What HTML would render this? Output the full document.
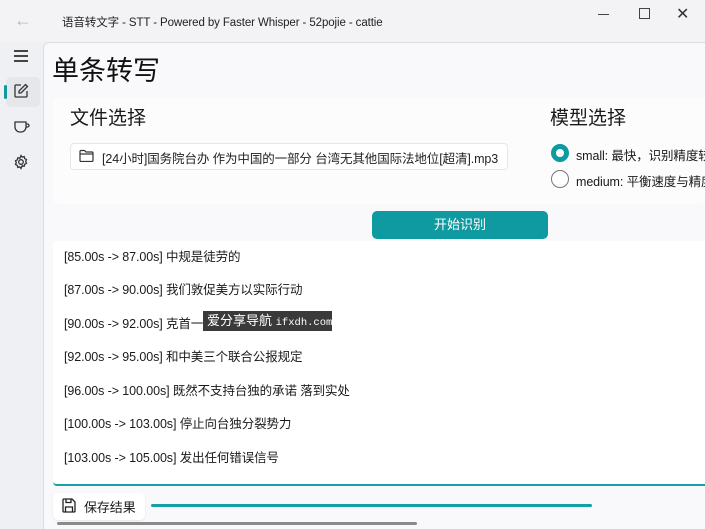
<!DOCTYPE html>
<html><head><meta charset="utf-8"><style>
*{margin:0;padding:0;box-sizing:border-box}
html,body{width:705px;height:529px;overflow:hidden}
body{background:#eef0f3;font-family:"Liberation Sans","Noto Sans CJK SC",sans-serif;color:#1a1a1a;position:relative}
.abs{position:absolute}
.t{font-size:12.5px;white-space:nowrap;letter-spacing:-0.1px}
</style></head><body>
<div class="abs" style="left:0;top:0;width:705px;height:42px;background:#f3f3f5"></div>
<div class="abs t" style="left:14px;top:10px;font-size:18px;color:#b8b8b8">←</div>
<div class="abs t" style="left:62px;top:14px;font-size:11.5px;color:#222">语音转文字 - STT - Powered by Faster Whisper - 52pojie - cattie</div>
<div class="abs" style="left:598px;top:14px;width:11px;height:1px;background:#444"></div>
<div class="abs" style="left:639px;top:8px;width:11px;height:11px;border:1px solid #444"></div>
<div class="abs t" style="left:676px;top:4px;font-size:16px;color:#333">✕</div>
<div class="abs" style="left:14px;top:50px;width:14px;height:2px;background:#444;box-shadow:0 5px 0 #444,0 10px 0 #444"></div>
<div class="abs" style="left:6px;top:77px;width:34px;height:30px;background:#e6e7ea;border-radius:5px"></div>
<div class="abs" style="left:4px;top:85px;width:3px;height:14px;background:#0e9aa0;border-radius:2px"></div>
<svg class="abs" style="left:13px;top:83px" width="16" height="16" viewBox="0 0 16 16" fill="none" stroke="#333" stroke-width="1.3"><path d="M8 2H3a1 1 0 0 0-1 1v10a1 1 0 0 0 1 1h10a1 1 0 0 0 1-1V8"/><path d="M12.5 1.5l2 2L8 10H6V8z"/></svg>
<svg class="abs" style="left:14px;top:120px" width="16" height="14" viewBox="0 0 16 14" fill="none" stroke="#333" stroke-width="1.3"><path d="M1 2h11v5a5 5 0 0 1-5 5h-1a5 5 0 0 1-5-5z"/><path d="M12 4h1.5a1.5 1.5 0 0 1 0 3H12"/></svg>
<svg class="abs" style="left:13px;top:154px" width="16" height="16" viewBox="0 0 16 16" fill="none" stroke="#333" stroke-width="1.3"><circle cx="8" cy="8" r="2.3"/><path d="M8 1.5l1.2 1.6 2-.5.5 2 1.8.9-.8 1.9.8 1.9-1.8.9-.5 2-2-.5L8 14.5l-1.2-1.6-2 .5-.5-2-1.8-.9.8-1.9-.8-1.9 1.8-.9.5-2 2 .5z"/></svg>
<div class="abs" style="left:43px;top:42px;width:670px;height:495px;background:#f9f9fb;border:1px solid #dcdde0;border-radius:6px 0 0 0"></div>
<div class="abs t" style="left:52px;top:49px;font-size:27px;color:#111;letter-spacing:0">单条转写</div>
<div class="abs" style="left:53px;top:98px;width:652px;height:106px;background:#fcfcfd;border-radius:5px"></div>
<div class="abs t" style="left:70px;top:103px;font-size:19px;letter-spacing:0">文件选择</div>
<div class="abs" style="left:70px;top:143px;width:438px;height:27px;background:#fff;border:1px solid #e6e6e8;border-radius:4px"></div>
<svg class="abs" style="left:79px;top:149px" width="15" height="13" viewBox="0 0 15 13" fill="none" stroke="#333" stroke-width="1.2"><path d="M1 2.5a1 1 0 0 1 1-1h3.5l1.5 1.5h6a1 1 0 0 1 1 1v7.5a1 1 0 0 1-1 1H2a1 1 0 0 1-1-1z"/><path d="M1 5h13"/></svg>
<div class="abs t" style="left:102px;top:148px;color:#222;letter-spacing:-0.1px">[24小时]国务院台办 作为中国的一部分 台湾无其他国际法地位[超清].mp3</div>
<div class="abs t" style="left:550px;top:103px;font-size:19px;letter-spacing:0">模型选择</div>
<div class="abs" style="left:551px;top:144px;width:18px;height:18px;border-radius:50%;border:5px solid #0e9aa0;background:#fff"></div>
<div class="abs t" style="left:576px;top:145px">small: 最快，识别精度较低</div>
<div class="abs" style="left:551px;top:170px;width:18px;height:18px;border-radius:50%;border:1px solid #777;background:#fff"></div>
<div class="abs t" style="left:576px;top:171px">medium: 平衡速度与精度</div>
<div class="abs" style="left:372px;top:211px;width:176px;height:28px;background:#0e9aa0;border-radius:5px;color:#fff;font-size:13px;text-align:center;line-height:27px">开始识别</div>
<div class="abs" style="left:53px;top:241px;width:652px;height:245px;background:#fff;border-bottom:2px solid #13a0a6;border-radius:4px 0 0 4px"></div>
<div class="abs t" style="left:64px;top:246px">[85.00s -&gt; 87.00s] 中规是徒劳的</div>
<div class="abs t" style="left:64px;top:279px">[87.00s -&gt; 90.00s] 我们敦促美方以实际行动</div>
<div class="abs t" style="left:64px;top:313px">[90.00s -&gt; 92.00s] 克首一个</div>
<div class="abs" style="left:203px;top:311px;width:129px;height:20px;background:#3a3a3a;color:#fff;font-size:13px;line-height:20px;padding-left:4px;white-space:nowrap;overflow:hidden">爱分享导航 <span style="font-family:'Liberation Mono',monospace;font-size:10.5px">ifxdh.com</span></div>
<div class="abs t" style="left:64px;top:346px">[92.00s -&gt; 95.00s] 和中美三个联合公报规定</div>
<div class="abs t" style="left:64px;top:380px">[96.00s -&gt; 100.00s] 既然不支持台独的承诺 落到实处</div>
<div class="abs t" style="left:64px;top:413px">[100.00s -&gt; 103.00s] 停止向台独分裂势力</div>
<div class="abs t" style="left:64px;top:447px">[103.00s -&gt; 105.00s] 发出任何错误信号</div>
<div class="abs" style="left:53px;top:493px;width:92px;height:27px;background:#fff;border-radius:5px;box-shadow:0 1px 2px rgba(0,0,0,.08)"></div>
<svg class="abs" style="left:62px;top:498px" width="14" height="15" viewBox="0 0 14 15" fill="none" stroke="#222" stroke-width="1.3"><path d="M1 2a1 1 0 0 1 1-1h8l3 3v9a1 1 0 0 1-1 1H2a1 1 0 0 1-1-1z"/><path d="M4 1v3.5h5V1M3.5 14V9h7v5"/></svg>
<div class="abs t" style="left:84px;top:497px;font-size:13px">保存结果</div>
<div class="abs" style="left:151px;top:504px;width:441px;height:3px;background:#13a0a6;border-radius:2px"></div>
<div class="abs" style="left:57px;top:522px;width:360px;height:3px;background:#8a8a8a;border-radius:2px"></div>
</body></html>
